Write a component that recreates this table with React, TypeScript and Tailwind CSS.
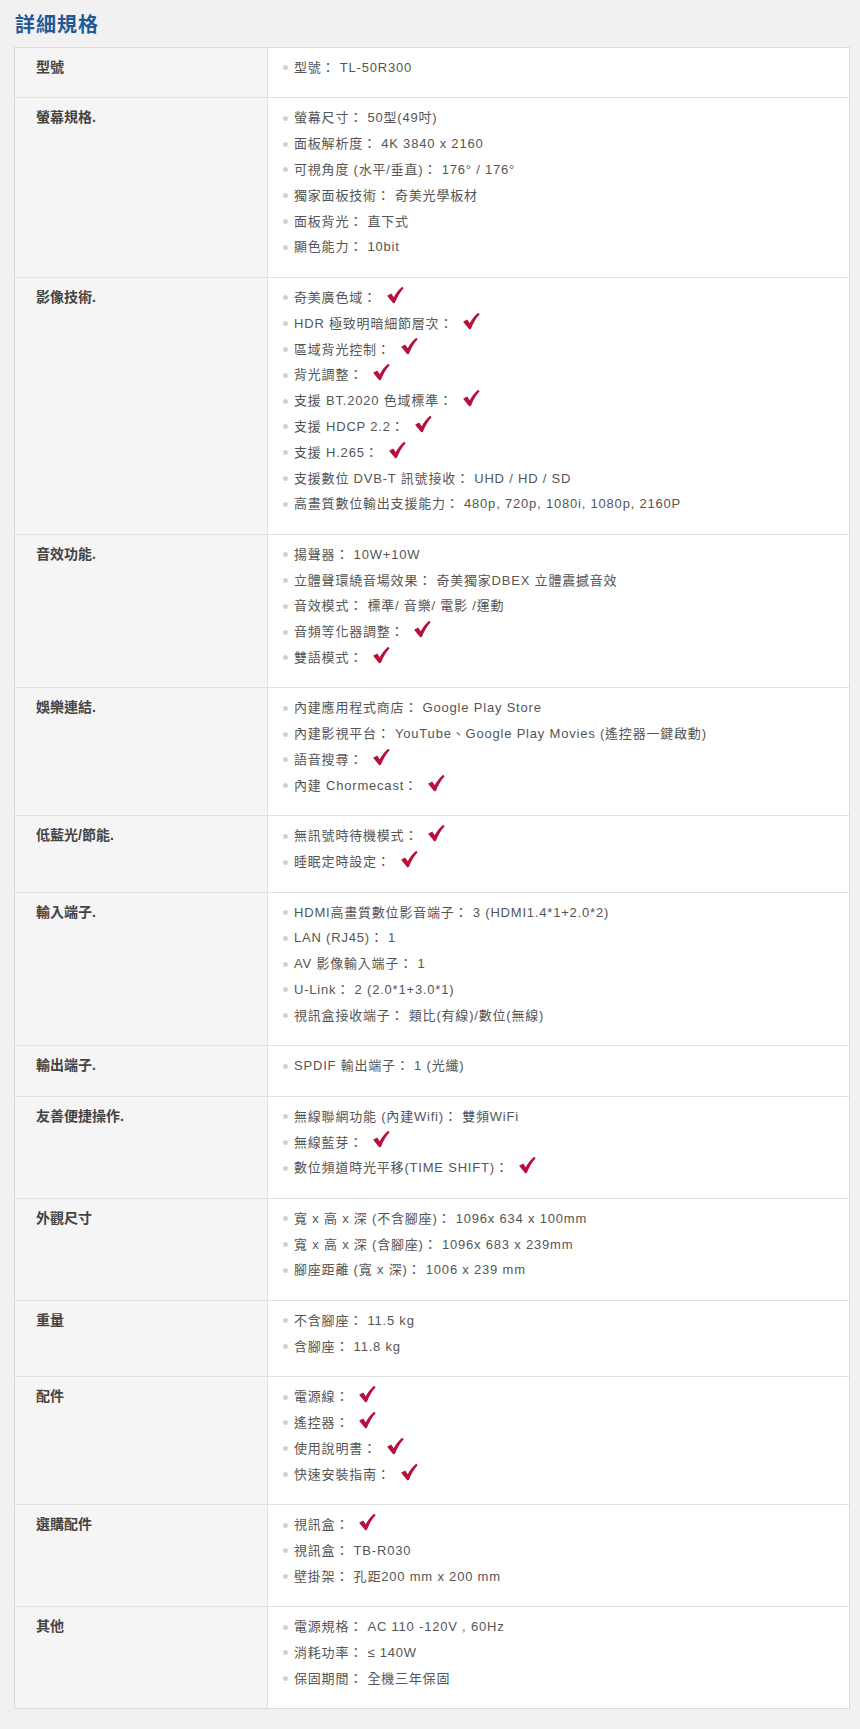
import React from "react";

type SpecItem = { text: string; check?: boolean };
type SpecRow = { label: string; items: SpecItem[] };

const t = (text: string): SpecItem => ({ text });
const c = (text: string): SpecItem => ({ text, check: true });

const rows: SpecRow[] = [
  { label: "型號", items: [t("型號： TL-50R300")] },
  {
    label: "螢幕規格.",
    items: [
      t("螢幕尺寸： 50型(49吋)"),
      t("面板解析度： 4K 3840 x 2160"),
      t("可視角度 (水平/垂直)： 176° / 176°"),
      t("獨家面板技術： 奇美光學板材"),
      t("面板背光： 直下式"),
      t("顯色能力： 10bit"),
    ],
  },
  {
    label: "影像技術.",
    items: [
      c("奇美廣色域："),
      c("HDR 極致明暗細節層次："),
      c("區域背光控制："),
      c("背光調整："),
      c("支援 BT.2020 色域標準："),
      c("支援 HDCP 2.2："),
      c("支援 H.265："),
      t("支援數位 DVB-T 訊號接收： UHD / HD / SD"),
      t("高畫質數位輸出支援能力： 480p, 720p, 1080i, 1080p, 2160P"),
    ],
  },
  {
    label: "音效功能.",
    items: [
      t("揚聲器： 10W+10W"),
      t("立體聲環繞音場效果： 奇美獨家DBEX 立體震撼音效"),
      t("音效模式： 標準/ 音樂/ 電影 /運動"),
      c("音頻等化器調整："),
      c("雙語模式："),
    ],
  },
  {
    label: "娛樂連結.",
    items: [
      t("內建應用程式商店： Google Play Store"),
      t("內建影視平台： YouTube、Google Play Movies (遙控器一鍵啟動)"),
      c("語音搜尋："),
      c("內建 Chormecast："),
    ],
  },
  {
    label: "低藍光/節能.",
    items: [c("無訊號時待機模式："), c("睡眠定時設定：")],
  },
  {
    label: "輸入端子.",
    items: [
      t("HDMI高畫質數位影音端子： 3 (HDMI1.4*1+2.0*2)"),
      t("LAN (RJ45)： 1"),
      t("AV 影像輸入端子： 1"),
      t("U-Link： 2 (2.0*1+3.0*1)"),
      t("視訊盒接收端子： 類比(有線)/數位(無線)"),
    ],
  },
  { label: "輸出端子.", items: [t("SPDIF 輸出端子： 1 (光纖)")] },
  {
    label: "友善便捷操作.",
    items: [
      t("無線聯網功能 (內建Wifi)： 雙頻WiFi"),
      c("無線藍芽："),
      c("數位頻道時光平移(TIME SHIFT)："),
    ],
  },
  {
    label: "外觀尺寸",
    items: [
      t("寬 x 高 x 深 (不含腳座)： 1096x 634 x 100mm"),
      t("寬 x 高 x 深 (含腳座)： 1096x 683 x 239mm"),
      t("腳座距離 (寬 x 深)： 1006 x 239 mm"),
    ],
  },
  { label: "重量", items: [t("不含腳座： 11.5 kg"), t("含腳座： 11.8 kg")] },
  {
    label: "配件",
    items: [c("電源線："), c("遙控器："), c("使用說明書："), c("快速安裝指南：")],
  },
  {
    label: "選購配件",
    items: [c("視訊盒："), t("視訊盒： TB-R030"), t("壁掛架： 孔距200 mm x 200 mm")],
  },
  {
    label: "其他",
    items: [
      t("電源規格： AC 110 -120V , 60Hz"),
      t("消耗功率： ≤ 140W"),
      t("保固期間： 全機三年保固"),
    ],
  },
];

function Check() {
  return (
    <svg
      viewBox="0 0 20 20"
      className="inline-block w-[18px] h-[18px] ml-[9px] align-middle -translate-y-[3px]"
    >
      <path
        d="M1.2 10.8 L5.8 8.4 L8.6 12.6 C11 8 14.2 4 18 0.8 L19.6 2.6 C15.8 6.6 12.4 12.2 9.8 19 L8 19.2 Z"
        fill="#b8103d"
      />
    </svg>
  );
}

function Row({ row, first }: { row: SpecRow; first: boolean }) {
  return (
    <div
      className={`grid grid-cols-[253px_1fr] ${first ? "" : "border-t border-[#e1e1e1]"}`}
    >
      <div className="bg-[#f5f5f5] border-r border-[#e1e1e1] pl-[21px] pt-[7px] pb-[16.7px] text-[14px] font-bold leading-[25.8px] text-[#444]">
        {row.label}
      </div>
      <ul className="bg-white pl-[15px] pt-[7px] pb-[16.7px]">
        {row.items.map((item, i) => (
          <li
            key={i}
            className="flex items-center h-[25.8px] text-[13px] leading-[25.8px] tracking-[0.8px] text-[#555] whitespace-nowrap"
          >
            <span className="w-[5px] h-[5px] rounded-full bg-[#d2d2d2] mr-[6px] shrink-0" />
            <span>{item.text}</span>
            {item.check && <Check />}
          </li>
        ))}
      </ul>
    </div>
  );
}

export default function App() {
  return (
    <div
      className="min-h-[1729px] bg-[#f1f1f1] pt-[11px] pb-[21px] pl-[14px] pr-[10px]"
      style={{ fontFamily: '"Liberation Sans", "Noto Sans CJK TC", sans-serif' }}
    >
      <h2 className="pl-px text-[20px] font-bold leading-[28px] tracking-[1px] text-[#1f5a96]">
        詳細規格
      </h2>
      <div className="mt-[8px] border border-[#dcdcdc]">
        {rows.map((row, i) => (
          <Row key={row.label} row={row} first={i === 0} />
        ))}
      </div>
    </div>
  );
}
